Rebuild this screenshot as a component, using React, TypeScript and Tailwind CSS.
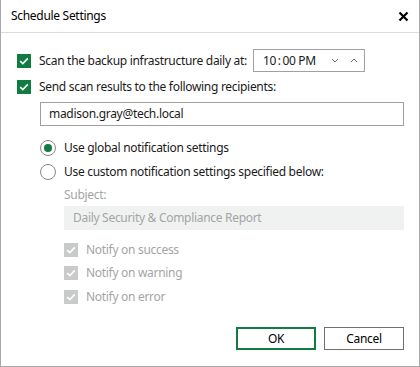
import React from 'react';

const font = { fontFamily: '"Segoe UI", "Noto Sans", "Liberation Sans", sans-serif' };

function Check({ disabled = false }: { disabled?: boolean }) {
  return (
    <span
      className={`flex h-[14px] w-[14px] shrink-0 items-center justify-center ${
        disabled ? 'bg-[#c9cbcb]' : 'bg-[#107c41]'
      }`}
    >
      <svg width="10" height="8" viewBox="0 0 10 8" fill="none">
        <path d="M1.2 4.2 L3.8 6.6 L8.8 1.4" stroke="white" strokeWidth="1.6" />
      </svg>
    </span>
  );
}

function Radio({ on = false }: { on?: boolean }) {
  return (
    <span className="flex h-[16px] w-[16px] shrink-0 items-center justify-center rounded-full border border-[#8a8a8a] bg-white">
      {on && <span className="h-[8px] w-[8px] rounded-full bg-[#107c41]" />}
    </span>
  );
}

export default function App() {
  return (
    <div
      className="flex h-[367px] w-[420px] flex-col border-x border-b border-[#a9a9a9] bg-white text-[12px] tracking-[-0.3px] text-[#1a1a1a]"
      style={font}
    >
      {/* Title bar */}
      <div className="flex h-[33px] shrink-0 items-center justify-between border-b border-[#dcdcdc] pl-[10px] pr-[10px]">
        <span className="text-[12px] text-black">Schedule Settings</span>
        <svg width="11" height="11" viewBox="0 0 11 11">
          <path d="M1.5 1.5 L9.5 9.5 M9.5 1.5 L1.5 9.5" stroke="black" strokeWidth="2.2" />
        </svg>
      </div>

      <div className="flex flex-col pl-[16px] pr-[15px]">
        {/* Scan daily */}
        <div className="mt-[16px] flex h-[23px] items-center">
          <Check />
          <span className="ml-[8px]">Scan the backup infrastructure daily at:</span>
          <div className="ml-[6px] flex h-[23px] w-[112px] items-center border border-[#a0a0a0] pl-[9px] pr-[6px]">
            <span className="flex-1">10{'\u2009'}:{'\u2009'}00 PM</span>
            <svg width="8" height="5" viewBox="0 0 8 5" className="mr-[11px]">
              <path d="M1 1 L4 4 L7 1" stroke="#707070" strokeWidth="1" fill="none" />
            </svg>
            <svg width="8" height="5" viewBox="0 0 8 5">
              <path d="M1 4 L4 1 L7 4" stroke="#707070" strokeWidth="1" fill="none" />
            </svg>
          </div>
        </div>

        {/* Send results */}
        <div className="mt-[8px] flex h-[14px] items-center">
          <Check />
          <span className="ml-[8px]">Send scan results to the following recipients:</span>
        </div>

        <div className="ml-[23px] mt-[8px] flex h-[24px] items-center border border-[#a0a0a0] pl-[8px]">
          madison.gray@tech.local
        </div>

        {/* Radios */}
        <div className="ml-[23px] mt-[14px] flex h-[16px] items-center">
          <Radio on />
          <span className="ml-[8px]">Use global notification settings</span>
        </div>
        <div className="ml-[23px] mt-[8px] flex h-[16px] items-center">
          <Radio />
          <span className="ml-[8px]">Use custom notification settings specified below:</span>
        </div>

        {/* Disabled custom section */}
        <div className="ml-[47px] flex flex-col text-[#a3a5a5]">
          <div className="mt-[7px] flex h-[16px] items-center">Subject:</div>
          <div className="mt-[3px] flex h-[24px] items-center bg-[#f0f1f1] pl-[9px]">
            Daily Security &amp; Compliance Report
          </div>
          <div className="mt-[13px] flex h-[14px] items-center">
            <Check disabled />
            <span className="ml-[8px]">Notify on success</span>
          </div>
          <div className="mt-[9px] flex h-[14px] items-center">
            <Check disabled />
            <span className="ml-[8px]">Notify on warning</span>
          </div>
          <div className="mt-[10px] flex h-[14px] items-center">
            <Check disabled />
            <span className="ml-[8px]">Notify on error</span>
          </div>
        </div>

        {/* Buttons */}
        <div className="mt-[23px] flex justify-end gap-[8px]">
          <button className="flex h-[23px] w-[80px] items-center justify-center border-2 border-[#107c41] bg-white text-black">
            OK
          </button>
          <button className="flex h-[23px] w-[80px] items-center justify-center border border-[#707070] bg-white text-black">
            Cancel
          </button>
        </div>
      </div>
    </div>
  );
}
